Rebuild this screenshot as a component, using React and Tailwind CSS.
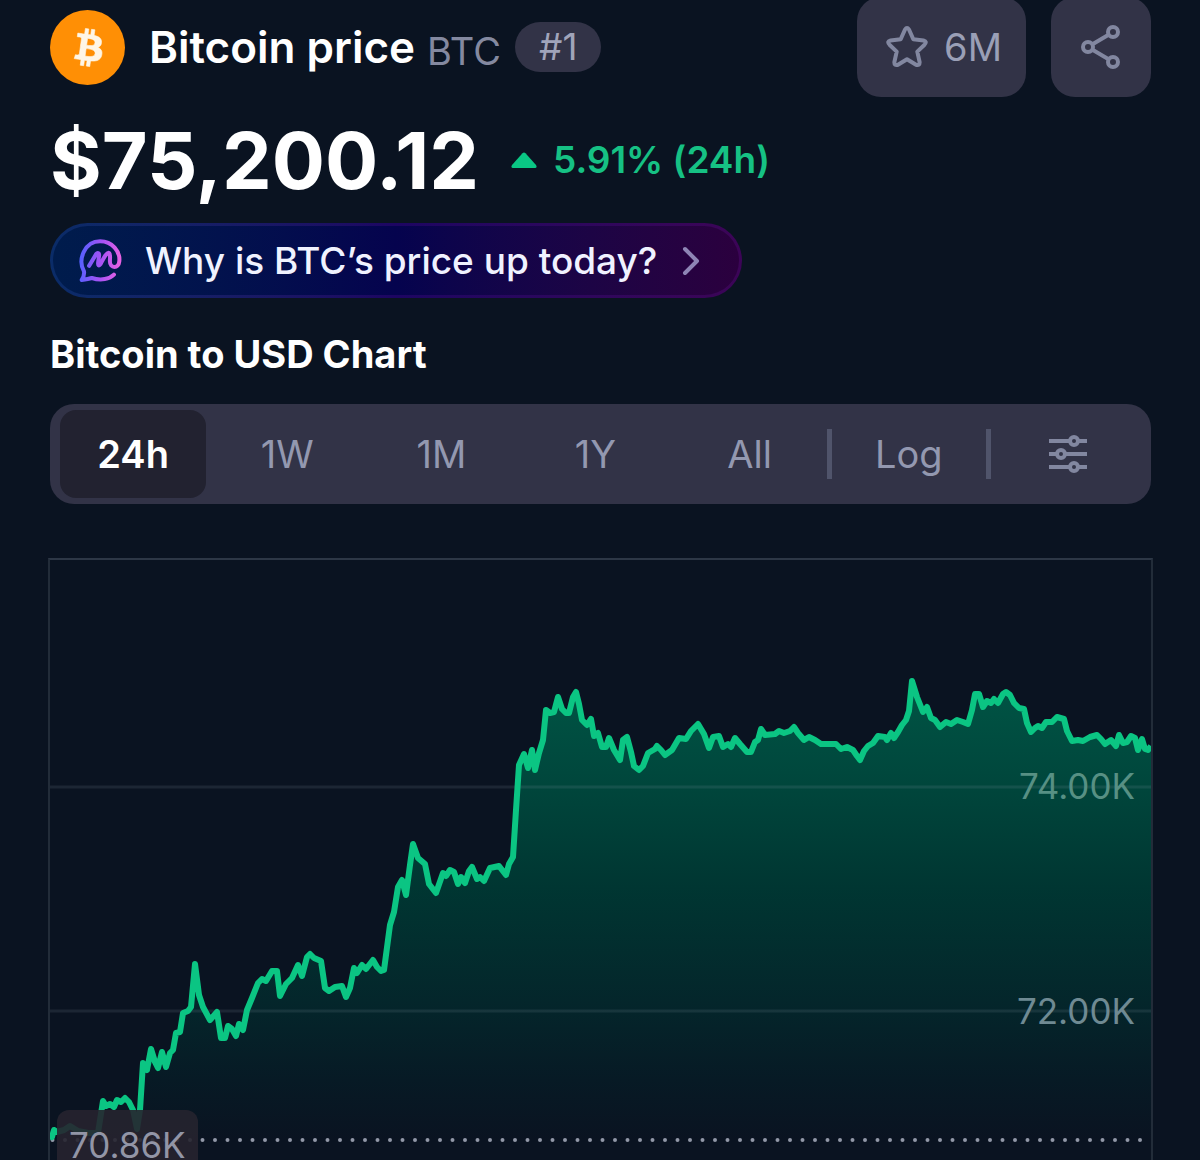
import React, { useState } from "react";
import { ChevronRight } from "lucide-react";

const ranges = ["24h", "1W", "1M", "1Y", "All"];

// price samples for the last 24h, in the chart's own units
const points = [
  [50, 1134], [52, 1137], [54, 1130], [57, 1132], [64, 1130], [70, 1126], [78, 1131], [88, 1133], [98, 1133],
  [103, 1101], [106, 1106], [110, 1104], [114, 1107], [117, 1100], [121, 1102], [125, 1098], [129, 1102],
  [133, 1110], [137, 1129], [140, 1110], [143, 1063], [147, 1070], [151, 1049], [155, 1062], [158, 1068],
  [162, 1052], [166, 1067], [170, 1053], [173, 1050], [176, 1033], [180, 1032], [183, 1013], [188, 1011],
  [191, 1007], [195, 964], [199, 995], [203, 1007], [210, 1020], [217, 1012], [221, 1038], [225, 1038],
  [228, 1026], [232, 1029], [236, 1036], [239, 1024], [243, 1030], [247, 1010], [252, 998], [258, 983],
  [262, 979], [266, 981], [272, 971], [277, 971], [280, 996], [286, 984], [292, 978], [298, 965], [302, 976],
  [307, 957], [310, 954], [314, 958], [321, 961], [325, 988], [329, 991], [335, 987], [342, 986], [346, 997],
  [350, 988], [354, 968], [357, 973], [362, 965], [366, 969], [373, 960], [377, 967], [381, 971], [384, 970],
  [390, 925], [394, 912], [398, 887], [402, 880], [406, 895], [410, 865], [413, 844], [418, 858], [425, 864],
  [429, 884], [436, 893], [443, 873], [446, 876], [450, 870], [454, 872], [458, 884], [461, 877], [465, 883],
  [469, 871], [472, 867], [477, 879], [480, 877], [484, 881], [490, 868], [499, 866], [506, 875], [509, 864],
  [513, 857], [516, 810], [519, 765], [524, 754], [528, 768], [532, 750], [535, 770], [539, 753], [543, 740],
  [546, 710], [550, 713], [554, 712], [558, 697], [562, 709], [566, 713], [569, 713], [573, 697], [576, 692],
  [579, 704], [582, 720], [587, 725], [591, 719], [594, 736], [598, 733], [602, 747], [606, 747], [609, 738],
  [614, 750], [620, 760], [623, 740], [627, 737], [631, 752], [634, 766], [639, 770], [643, 766], [648, 753],
  [655, 749], [657, 746], [661, 750], [665, 755], [672, 750], [679, 738], [686, 739], [691, 731], [698, 724],
  [704, 734], [709, 748], [713, 737], [719, 736], [723, 747], [728, 744], [731, 747], [735, 738], [740, 744],
  [747, 752], [751, 752], [755, 742], [758, 740], [761, 729], [765, 735], [775, 734], [779, 731], [784, 733],
  [790, 731], [794, 727], [798, 733], [804, 740], [809, 737], [815, 740], [821, 744], [836, 744], [841, 749],
  [847, 747], [853, 750], [857, 756], [860, 760], [864, 751], [868, 746], [873, 743], [878, 736], [885, 737],
  [887, 740], [891, 733], [894, 738], [898, 732], [902, 725], [906, 720], [909, 711], [912, 681], [917, 697],
  [923, 712], [927, 707], [931, 718], [935, 720], [940, 727], [946, 722], [951, 724], [957, 720], [963, 722],
  [968, 724], [972, 710], [975, 694], [979, 694], [983, 707], [987, 701], [991, 703], [994, 699], [998, 703],
  [1003, 694], [1006, 692], [1010, 695], [1014, 703], [1019, 708], [1024, 709], [1027, 723], [1031, 732],
  [1035, 728], [1038, 726], [1042, 728], [1046, 722], [1052, 722], [1057, 717], [1064, 719], [1067, 731],
  [1072, 741], [1078, 740], [1083, 741], [1090, 737], [1097, 735], [1101, 739], [1105, 744], [1111, 740],
  [1116, 746], [1119, 735], [1123, 743], [1127, 742], [1131, 736], [1135, 738], [1138, 750], [1142, 739],
  [1145, 749], [1148, 750], [1151, 746],
];

const linePath = "M" + points.map((p) => p.join(" ")).join("L");
const areaPath = linePath + "L1151 1140L50 1140Z";

function BitcoinLogo() {
  return (
    <svg viewBox="0 0 32 32" className="size-[75px] shrink-0" aria-hidden="true">
      <circle cx="16" cy="16" r="16" fill="#ff8f05" />
      <path
        transform="translate(16.3 16) rotate(-6) scale(.82) translate(-16 -16)"
        fill="#fff6e6"
        stroke="#fff6e6"
        strokeWidth="0.3"
        d="M23.189 14.02c.314-2.096-1.283-3.223-3.465-3.975l.708-2.84-1.728-.43-.69 2.765c-.454-.114-.92-.22-1.385-.326l.695-2.783L15.596 6l-.708 2.839c-.376-.086-.746-.17-1.104-.26l.002-.009-2.384-.595-.46 1.846s1.283.294 1.256.312c.7.175.826.638.805 1.006l-.806 3.235c.048.012.11.03.18.057l-.183-.045-1.13 4.532c-.086.212-.303.531-.793.41.018.025-1.256-.313-1.256-.313l-.858 1.978 2.25.561c.418.105.828.215 1.231.318l-.715 2.872 1.727.43.708-2.84c.472.127.93.245 1.378.357l-.706 2.828 1.728.43.715-2.866c2.948.558 5.164.333 6.097-2.333.752-2.146-.037-3.385-1.588-4.192 1.13-.26 1.98-1.003 2.207-2.538zm-3.95 5.538c-.533 2.147-4.148.986-5.32.695l.95-3.805c1.172.293 4.929.872 4.37 3.11zm.535-5.569c-.487 1.953-3.495.96-4.47.717l.86-3.45c.975.243 4.118.696 3.61 2.733z"
      />
    </svg>
  );
}

function StarIcon() {
  return (
    <svg viewBox="0 0 42 42" className="size-[42px]" fill="none" stroke="currentColor" strokeWidth="4" strokeLinejoin="round" aria-hidden="true">
      <path d="M19 3.5Q21 0.5 23 3.5L27.3 13.2L37.5 14.5Q41.5 15.5 38.5 18.7L31.3 25.6L33.6 36Q33.9 40 30 38.8L21 33.2L12 38.8Q8.1 40 8.4 36L10.7 25.6L3.5 18.7Q0.5 15.5 4.5 14.5L14.7 13.2Z" />
    </svg>
  );
}

function ShareIcon() {
  return (
    <svg viewBox="0 0 40 44" className="h-11 w-10" fill="none" stroke="currentColor" strokeWidth="4" aria-hidden="true">
      <circle cx="7" cy="22" r="5" />
      <circle cx="32" cy="7" r="5" />
      <circle cx="32" cy="37" r="5" />
      <path d="M11.5 19.2L27.6 9.8M11.5 24.8L27.6 34.2" />
    </svg>
  );
}

function AskIcon() {
  return (
    <svg viewBox="147 87 128 128" className="size-[43px]" fill="none" stroke="url(#ask)" strokeWidth="12" strokeLinecap="round" strokeLinejoin="round" aria-hidden="true">
      <defs>
        <linearGradient id="ask" gradientUnits="userSpaceOnUse" x1="150" y1="150" x2="272" y2="160">
          <stop offset="0" stopColor="#5560ff" />
          <stop offset="0.5" stopColor="#a552f5" />
          <stop offset="1" stopColor="#ea62e2" />
        </linearGradient>
      </defs>
      <path d="M251 193C238 206 213 212 185 203C175 207 165 208 155 209C160 202 163 194 162 184C142 148 164 94 210 94C246 94 270 124 267 153C265 176 239 176 239 153C239 142 241 134 237 129C229 124 217 151 211 162C206 169 203 165 204 157L207 135C207 128 202 127 198 132L177 167" />
    </svg>
  );
}

function SlidersIcon() {
  return (
    <svg viewBox="0 0 38 40" className="h-10 w-[38px]" fill="none" stroke="currentColor" strokeWidth="4" aria-hidden="true">
      <circle cx="25" cy="7" r="4" />
      <circle cx="12" cy="20" r="4" />
      <circle cx="25" cy="33" r="4" />
      <path d="M0 7H21M29 7H38M0 20H8M16 20H38M0 33H21M29 33H38" />
    </svg>
  );
}

function PriceChart() {
  return (
    <div className="relative -mx-0.5 h-[602px] overflow-hidden border-2 border-b-0 border-[#222c39] border-t-[#2d3746]">
      <svg viewBox="50 560 1101 600" preserveAspectRatio="none" className="block h-[600px] w-full" fill="none" role="img" aria-label="Bitcoin to USD, last 24 hours">
        <defs>
          <linearGradient id="area" gradientUnits="userSpaceOnUse" x1="0" y1="680" x2="0" y2="1140">
            <stop offset="0" stopColor="#005545" />
            <stop offset="0.2" stopColor="#00483d" />
            <stop offset="0.45" stopColor="#003632" />
            <stop offset="0.7" stopColor="#04262b" />
            <stop offset="0.87" stopColor="#071a25" />
            <stop offset="1" stopColor="#0a1321" />
          </linearGradient>
        </defs>
        <path d={areaPath} fill="url(#area)" />
        <path d="M50 787H1151M50 1011H1151" stroke="#9aa8b8" strokeOpacity="0.13" strokeWidth="3" />
        <path d="M52.5 1140H1142" stroke="#9298a8" strokeWidth="4" strokeLinecap="round" strokeDasharray="0 12.5" />
        <path d={linePath} stroke="#0bc583" strokeWidth="6" strokeLinejoin="round" />
      </svg>
      <span className="absolute top-[204px] right-4 text-[35px] leading-[44px] text-[#579084]">74.00K</span>
      <span className="absolute top-[429px] right-4 text-[35px] leading-[44px] text-[#6f8a93]">72.00K</span>
      <span className="absolute top-[550px] left-[7px] rounded-t-xl bg-[#26242f]/90 px-3 pt-5 text-[35px] leading-[30px] text-[#9295a6]">
        70.86K
      </span>
    </div>
  );
}

export default function App() {
  const [range, setRange] = useState("24h");
  const [log, setLog] = useState(false);

  return (
    <main className="min-h-screen overflow-hidden bg-[#0a1321] pr-[49px] pl-[50px] font-['Inter',sans-serif] text-white">
      <header className="-mt-[3px] flex items-center justify-between">
        <div className="flex items-center">
          <BitcoinLogo />
          <h1 className="ml-6 text-[44px] leading-[52px] font-semibold whitespace-nowrap">Bitcoin price</h1>
          <span className="ml-3 pt-2 text-[38px] text-[#8489a0]">BTC</span>
          <span className="ml-3.5 rounded-full bg-[#323347] px-6 text-[37px] leading-[50px] text-[#a0a4ba]">#1</span>
        </div>
        <div className="flex gap-[25px]">
          <button className="flex h-[100px] items-center gap-4 rounded-3xl bg-[#323347] pr-6 pl-[29px] text-[38px] text-[#9a9fb6]">
            <span className="text-[#8287a0]"><StarIcon /></span>
            6M
          </button>
          <button aria-label="Share" className="grid size-[100px] place-items-center rounded-3xl bg-[#323347] text-[#8287a0]">
            <ShareIcon />
          </button>
        </div>
      </header>

      <div className="mt-[15px] flex items-center">
        <p className="text-[79px] leading-[96px] font-bold">$75,200.12</p>
        <p className="ml-8 flex items-center gap-4 text-[37px] font-semibold text-[#16c184]">
          <svg viewBox="0 0 26 16" className="h-4 w-[26px]" fill="#0ac684" aria-hidden="true">
            <path d="M11.5 1.2Q13 0 14.5 1.2L25 13Q26.500 16 24 16H2Q-0.500 16 1 13Z" />
          </svg>
          5.91% (24h)
        </p>
      </div>

      <button className="mt-[15px] flex h-[75px] items-center rounded-full bg-linear-to-r from-[#0a2c68] via-[#1d0562] to-[#3c0457] p-[3px]">
        <span className="flex h-full items-center rounded-full bg-linear-to-r from-[#001c4c] via-[#05034e] to-[#2b003e] pr-6 pl-[26px] text-[37px] font-medium text-[#f0f2ff]">
          <AskIcon />
          <span className="ml-[23px]">Why is BTC’s price up today?</span>
          <ChevronRight className="ml-2.5 size-12 text-[#8e85b5]" strokeWidth={2} aria-hidden="true" />
        </span>
      </button>

      <h2 className="mt-8 text-[38px] leading-[48px] font-bold">Bitcoin to USD Chart</h2>

      <div className="mt-[26px] flex h-[100px] items-center rounded-3xl bg-[#323347] p-1.5 text-[38px] text-[#9398b0]">
        {ranges.map((r) => (
          <div key={r} className="flex h-full flex-1">
            <button
              onClick={() => setRange(r)}
              className={range === r ? "mx-1 flex-1 rounded-2xl bg-[#222230] font-semibold text-white" : "mx-1 flex-1 rounded-2xl"}
            >
              {r}
            </button>
          </div>
        ))}
        <span className="h-[50px] w-[5px] bg-[#50546b]" />
        <button onClick={() => setLog(!log)} className="h-full flex-1">Log</button>
        <span className="h-[50px] w-[5px] bg-[#50546b]" />
        <button aria-label="Chart settings" className="grid h-full flex-1 place-items-center text-[#8287a0]">
          <SlidersIcon />
        </button>
      </div>

      <section className="mt-[54px]">
        <PriceChart />
      </section>
    </main>
  );
}
